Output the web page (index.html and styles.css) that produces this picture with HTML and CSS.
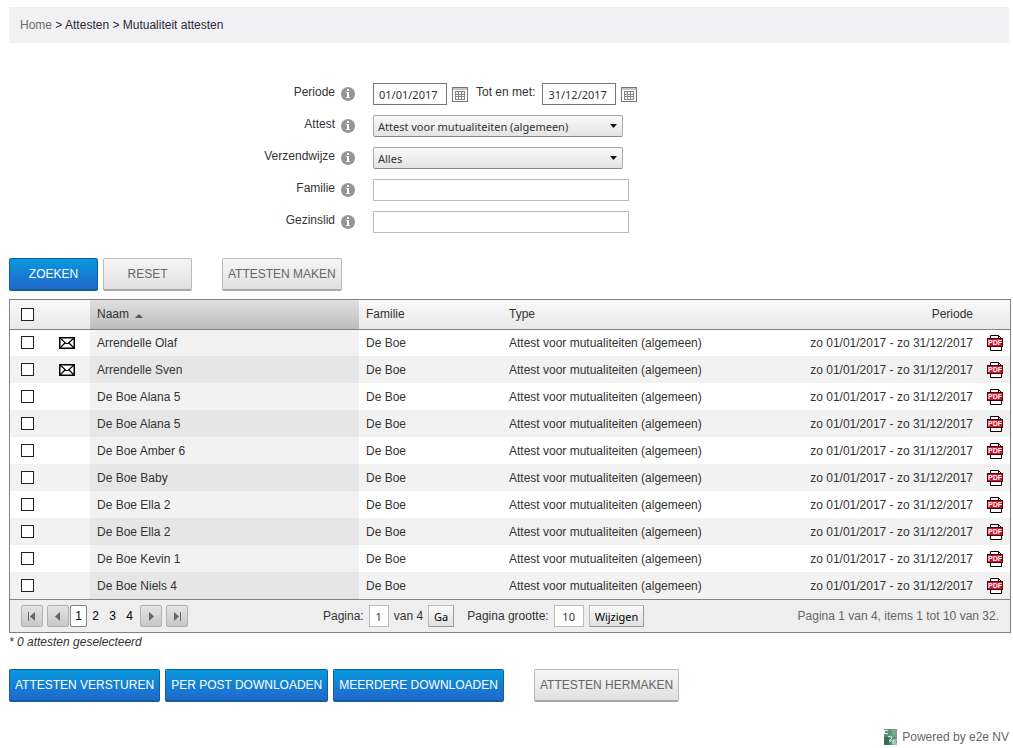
FILE: index.html
```html
<!DOCTYPE html>
<html lang="nl">
<head>
<meta charset="utf-8">
<title>Mutualiteit attesten</title>
<link rel="stylesheet" href="styles.css">
</head>
<body>
<svg class="sprite" aria-hidden="true">
  <symbol id="info" viewBox="0 0 14 14"><circle cx="7" cy="7" r="7" fill="#959595"/><path d="M6 2h2v2H6zM5 5h3v5h1v1H5v-1h1V6H5z" fill="#fff"/></symbol>
  <symbol id="calendar" viewBox="0 0 16 15"><path d="M0 0h16v15H0z" fill="#777"/><path d="M1 1h14v2H1z" fill="#c4c4c4"/><path d="M1 3h14v11H1z" fill="#fff"/><path d="M3 4h10v9H3z" fill="#888"/><path d="M4 5h2v2H4zM7 5h2v2H7zM10 5h2v2h-2zM4 8h2v1H4zM7 8h2v1H7zM10 8h2v1h-2zM4 10h2v2H4zM7 10h2v2H7zM10 10h2v2h-2z" fill="#fff"/></symbol>
  <symbol id="mail" viewBox="0 0 16 12"><path d="M.75.75h14.5v10.5H.75z" fill="#fff" stroke="#000" stroke-width="1.5"/><path d="M1 1l6 5.500h2L15 1M1 11l5-5M15 11l-5-5" fill="none" stroke="#000" stroke-width="1.200"/></symbol>
</svg>
<div class="page">
  <nav class="breadcrumb" aria-label="Kruimelpad"><a href="#">Home</a> &gt; Attesten &gt; Mutualiteit attesten</nav>

  <form class="filters">
    <div class="field"><label for="from">Periode</label><svg class="info"><use href="#info"/></svg>
      <div class="control"><input id="from" class="box date" type="text" value="01/01/2017"><button class="cal" type="button" aria-label="Kies begindatum"><svg><use href="#calendar"/></svg></button><label class="until" for="to">Tot en met:</label><input id="to" class="box date" type="text" value="31/12/2017"><button class="cal" type="button" aria-label="Kies einddatum"><svg><use href="#calendar"/></svg></button></div></div>
    <div class="field"><label for="attest">Attest</label><svg class="info"><use href="#info"/></svg>
      <div class="control"><select id="attest"><option>Attest voor mutualiteiten (algemeen)</option></select></div></div>
    <div class="field"><label for="mode">Verzendwijze</label><svg class="info"><use href="#info"/></svg>
      <div class="control"><select id="mode"><option>Alles</option></select></div></div>
    <div class="field"><label for="family">Familie</label><svg class="info"><use href="#info"/></svg>
      <div class="control"><input id="family" class="box wide" type="text"></div></div>
    <div class="field"><label for="member">Gezinslid</label><svg class="info"><use href="#info"/></svg>
      <div class="control"><input id="member" class="box wide" type="text"></div></div>
  </form>

  <div class="actions">
    <button class="btn primary even" type="button">ZOEKEN</button>
    <button class="btn even" type="button">RESET</button>
    <button class="btn apart" type="button">ATTESTEN MAKEN</button>
  </div>

  <div class="grid">
    <table>
      <colgroup><col class="c-check"><col class="c-mail"><col class="c-name"><col class="c-family"><col><col class="c-period"><col class="c-pdf"></colgroup>
      <thead><tr><th class="check"><input type="checkbox" aria-label="Alles selecteren"></th><th></th><th class="name">Naam <span class="sort"></span></th><th>Familie</th><th>Type</th><th class="period">Periode</th><th></th></tr></thead>
      <tbody>
        <tr><td class="check"><input type="checkbox" aria-label="Arrendelle Olaf"></td><td class="mail"><svg><use href="#mail"/></svg></td><td class="name">Arrendelle Olaf</td><td>De Boe</td><td>Attest voor mutualiteiten (algemeen)</td><td class="period">zo 01/01/2017 - zo 31/12/2017</td><td class="pdf"><a class="doc" href="#"><span>PDF</span></a></td></tr>
        <tr><td class="check"><input type="checkbox" aria-label="Arrendelle Sven"></td><td class="mail"><svg><use href="#mail"/></svg></td><td class="name">Arrendelle Sven</td><td>De Boe</td><td>Attest voor mutualiteiten (algemeen)</td><td class="period">zo 01/01/2017 - zo 31/12/2017</td><td class="pdf"><a class="doc" href="#"><span>PDF</span></a></td></tr>
        <tr><td class="check"><input type="checkbox" aria-label="De Boe Alana 5"></td><td></td><td class="name">De Boe Alana 5</td><td>De Boe</td><td>Attest voor mutualiteiten (algemeen)</td><td class="period">zo 01/01/2017 - zo 31/12/2017</td><td class="pdf"><a class="doc" href="#"><span>PDF</span></a></td></tr>
        <tr><td class="check"><input type="checkbox" aria-label="De Boe Alana 5"></td><td></td><td class="name">De Boe Alana 5</td><td>De Boe</td><td>Attest voor mutualiteiten (algemeen)</td><td class="period">zo 01/01/2017 - zo 31/12/2017</td><td class="pdf"><a class="doc" href="#"><span>PDF</span></a></td></tr>
        <tr><td class="check"><input type="checkbox" aria-label="De Boe Amber 6"></td><td></td><td class="name">De Boe Amber 6</td><td>De Boe</td><td>Attest voor mutualiteiten (algemeen)</td><td class="period">zo 01/01/2017 - zo 31/12/2017</td><td class="pdf"><a class="doc" href="#"><span>PDF</span></a></td></tr>
        <tr><td class="check"><input type="checkbox" aria-label="De Boe Baby"></td><td></td><td class="name">De Boe Baby</td><td>De Boe</td><td>Attest voor mutualiteiten (algemeen)</td><td class="period">zo 01/01/2017 - zo 31/12/2017</td><td class="pdf"><a class="doc" href="#"><span>PDF</span></a></td></tr>
        <tr><td class="check"><input type="checkbox" aria-label="De Boe Ella 2"></td><td></td><td class="name">De Boe Ella 2</td><td>De Boe</td><td>Attest voor mutualiteiten (algemeen)</td><td class="period">zo 01/01/2017 - zo 31/12/2017</td><td class="pdf"><a class="doc" href="#"><span>PDF</span></a></td></tr>
        <tr><td class="check"><input type="checkbox" aria-label="De Boe Ella 2"></td><td></td><td class="name">De Boe Ella 2</td><td>De Boe</td><td>Attest voor mutualiteiten (algemeen)</td><td class="period">zo 01/01/2017 - zo 31/12/2017</td><td class="pdf"><a class="doc" href="#"><span>PDF</span></a></td></tr>
        <tr><td class="check"><input type="checkbox" aria-label="De Boe Kevin 1"></td><td></td><td class="name">De Boe Kevin 1</td><td>De Boe</td><td>Attest voor mutualiteiten (algemeen)</td><td class="period">zo 01/01/2017 - zo 31/12/2017</td><td class="pdf"><a class="doc" href="#"><span>PDF</span></a></td></tr>
        <tr><td class="check"><input type="checkbox" aria-label="De Boe Niels 4"></td><td></td><td class="name">De Boe Niels 4</td><td>De Boe</td><td>Attest voor mutualiteiten (algemeen)</td><td class="period">zo 01/01/2017 - zo 31/12/2017</td><td class="pdf"><a class="doc" href="#"><span>PDF</span></a></td></tr>
      </tbody>
    </table>
    <div class="pager">
      <div class="pages">
        <button class="nav" type="button" aria-label="Eerste pagina"><svg viewBox="0 0 20 20"><path d="M6 6h1v9H6zM13 6v9l-5-4.500z"/></svg></button>
        <button class="nav" type="button" aria-label="Vorige pagina"><svg viewBox="0 0 20 20"><path d="M12 6v9l-5-4.500z"/></svg></button>
        <div class="numbers"><a class="current" href="#">1</a><a href="#">2</a><a href="#">3</a><a href="#">4</a></div>
        <button class="nav" type="button" aria-label="Volgende pagina"><svg viewBox="0 0 20 20"><path d="M8 6v9l5-4.500z"/></svg></button>
        <button class="nav" type="button" aria-label="Laatste pagina"><svg viewBox="0 0 20 20"><path d="M7 6v9l5-4.500zM13 6h1v9h-1z"/></svg></button>
      </div>
      <div class="jump">
        <label for="page">Pagina:</label><input id="page" class="box num" type="text" value="1"><span>van 4</span><button class="small" type="button">Ga</button>
      </div>
      <div class="jump">
        <label for="size">Pagina grootte:</label><input id="size" class="box num size" type="text" value="10"><button class="small" type="button">Wijzigen</button>
      </div>
      <div class="summary">Pagina 1 van 4, items 1 tot 10 van 32.</div>
    </div>
  </div>
  <p class="selected">* 0 attesten geselecteerd</p>

  <div class="actions bottom">
    <button class="btn primary" type="button">ATTESTEN VERSTUREN</button>
    <button class="btn primary" type="button">PER POST DOWNLOADEN</button>
    <button class="btn primary" type="button">MEERDERE DOWNLOADEN</button>
    <button class="btn apart" type="button">ATTESTEN HERMAKEN</button>
  </div>

  <footer class="powered">
    <svg viewBox="0 0 13 16" aria-hidden="true"><path d="M0 0h13v16H0z" fill="#5a9474"/><path d="M7 0h6v8H9z" fill="#77a78b"/><path d="M0 8h5v8H0z" fill="#376f53"/><path d="M0 1.500h4M0 4.500h4M.5 1v4M4 8l3-1 1 2-3 3h3M9 11h4M9 11v4h4M9 13h3" fill="none" stroke="#e6f2ea"/></svg>
    <span>Powered by e2e NV</span>
  </footer>
</div>
</body>
</html>
```
FILE: styles.css
```css
* { box-sizing: border-box; }
body { margin: 0; background: #fff; color: #333; font: 12px/16px "Liberation Sans", Arial, sans-serif; }
input, select, button { margin: 0; font: inherit; color: inherit; }
a { color: inherit; text-decoration: none; }
svg { display: block; }
.sprite { display: none; }
.page { padding: 7px 2px 0 9px; }

.breadcrumb { margin-right: 2px; padding: 10px 11px; background: #f1f1f3; color: #2d2838; }
.breadcrumb a { color: #6b6b6b; }

.filters { display: grid; gap: 10px; padding-top: 40px; }
.field { display: grid; grid-template-columns: 326px 14px 1fr; column-gap: 6px; align-items: center; }
.field > label { text-align: right; padding-bottom: 4px; }
.info { width: 14px; height: 14px; }
.control { display: flex; align-items: center; padding-left: 12px; }
.box { height: 22px; border: 1px solid #bbb; background: #fff; padding: 0 5px; font: 11px "Noto Sans", sans-serif; }
.date { width: 74px; border-color: #777; }
.wide { width: 256px; }
.cal { margin-left: 5px; padding: 0; border: 0; background: none; }
.cal svg { width: 16px; height: 15px; }
.until { margin: 0 7px 0 8px; padding-bottom: 4px; }
select { width: 250px; height: 22px; padding: 0 4px; appearance: none; border: 1px solid #aaa; border-bottom-color: #888; border-radius: 2px; font: 11px "Noto Sans", sans-serif; background: url("data:image/svg+xml,%3Csvg xmlns='http://www.w3.org/2000/svg' width='7' height='4'%3E%3Cpath d='M0 0h7L3.500 4z' fill='%23111'/%3E%3C/svg%3E") no-repeat right 5px center, linear-gradient(#fafafa, #e3e3e3); }

.actions { display: flex; gap: 5px; padding-top: 25px; }
.btn { height: 33px; padding: 0 5px; border: 1px solid #bbb; border-bottom: 2px solid #a8a8a8; border-radius: 2px; color: #666; background: linear-gradient(#f6f6f6, #e0e0e0); white-space: nowrap; }
.primary { color: #fff; border-color: #155e9c; background: linear-gradient(#0898dc, #2068cc); }
.even { width: 89px; }
.apart { margin-left: 25px; }

.grid { margin-top: 8px; border: 1px solid #828282; }
table { width: 100%; border-collapse: collapse; table-layout: fixed; }
.c-check { width: 40px; }
.c-mail { width: 40px; }
.c-name { width: 269px; }
.c-family { width: 143px; }
.c-period { width: 200px; }
.c-pdf { width: 30px; }
th, td { height: 27px; padding: 0 7px; font-weight: normal; text-align: left; white-space: nowrap; }
thead tr { background: linear-gradient(#f9f9f9, #e9e9e9); }
th { height: 29px; border-bottom: 1px solid #828282; }
th.name { background: linear-gradient(#e0e0e0, #bdbdbd); }
td.name { background: #f2f2f2; }
tbody tr:nth-child(even) { background: #f2f2f2; }
tbody tr:nth-child(even) .name { background: #e6e6e6; }
.check { padding-left: 11px; }
.check input { display: block; width: 13px; height: 13px; appearance: none; border: 1px solid #222; background: #fff; }
.mail { padding-left: 9px; }
.mail svg { width: 16px; height: 12px; }
th.period, td.period { text-align: right; }
.doc { display: flex; align-items: center; width: 16px; height: 16px; background: url("data:image/svg+xml,%3Csvg xmlns='http://www.w3.org/2000/svg' width='16' height='16'%3E%3Cpath d='M3.500.5h8l3 3v12h-11zM11.500.5v3h3' fill='%23fff' stroke='%23000'/%3E%3C/svg%3E"); }
.doc span { width: 16px; height: 9px; border: 1px solid #4a0008; background: #d2142d; color: #fff; font: bold 7px/7px "Liberation Sans", sans-serif; text-align: center; }
.sort { display: inline-block; margin-left: 3px; border: solid transparent; border-width: 0 4px 4px; border-bottom-color: #555; }

.pager { display: flex; align-items: center; height: 33px; padding: 0 11px; border-top: 1px solid #828282; background: #eee; }
.pages { display: flex; align-items: center; gap: 4px; width: 302px; }
.nav { width: 22px; height: 22px; padding: 0; border: 1px solid #b0b0b0; border-radius: 2px; background: linear-gradient(#e3e3e3, #c8c8c8); }
.nav svg { width: 20px; height: 20px; fill: #666; }
.numbers { display: flex; margin: 0 -2px 0 -3px; color: #000; }
.numbers a { width: 17px; height: 22px; line-height: 22px; text-align: center; }
.numbers .current { border: 1px solid #828282; border-radius: 2px; background: #fff; line-height: 20px; }
.jump { display: flex; align-items: center; gap: 5px; margin-right: 13px; }
.num { width: 20px; text-align: center; padding: 0; }
.size { width: 30px; }
.small { height: 22px; padding: 0 5px; border: 1px solid #aaa; border-color: #bbb #999 #999 #bbb; background: linear-gradient(#fafafa, #e0e0e0); color: #000; font: 11px "Noto Sans", sans-serif; }
.summary { margin-left: auto; color: #666; }
.selected { margin: 1px 0 0; font-style: italic; }
.bottom { padding-top: 19px; }
.powered { display: flex; justify-content: flex-end; align-items: center; gap: 5px; margin-top: 27px; padding-right: 2px; color: #666; }
.powered svg { width: 13px; height: 16px; }
```
